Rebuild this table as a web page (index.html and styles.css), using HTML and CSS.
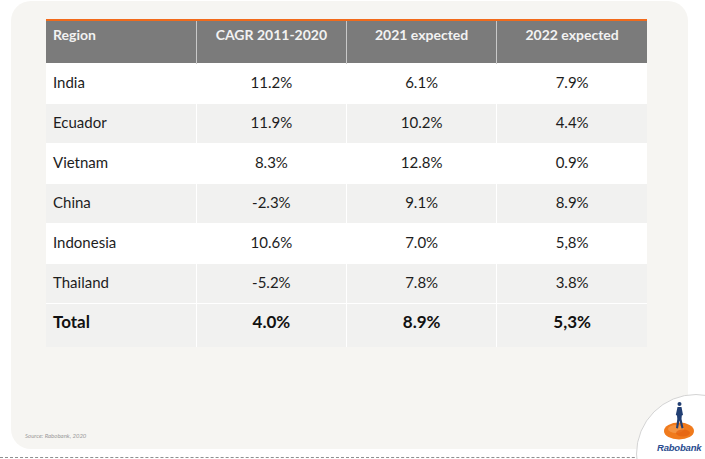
FILE: index.html
```html
<!DOCTYPE html>
<html>
<head>
<meta charset="utf-8">
<link rel="stylesheet" href="styles.css">
</head>
<body>
<div class="page">
  <div class="card">
    <table class="data">
      <thead>
        <tr><th class="first">Region</th><th>CAGR 2011-2020</th><th>2021 expected</th><th>2022 expected</th></tr>
      </thead>
      <tbody>
        <tr class="w"><td class="first">India</td><td>11.2%</td><td>6.1%</td><td>7.9%</td></tr>
        <tr class="g"><td class="first">Ecuador</td><td>11.9%</td><td>10.2%</td><td>4.4%</td></tr>
        <tr class="w"><td class="first">Vietnam</td><td>8.3%</td><td>12.8%</td><td>0.9%</td></tr>
        <tr class="g"><td class="first">China</td><td>-2.3%</td><td>9.1%</td><td>8.9%</td></tr>
        <tr class="w"><td class="first">Indonesia</td><td>10.6%</td><td>7.0%</td><td>5,8%</td></tr>
        <tr class="g"><td class="first">Thailand</td><td>-5.2%</td><td>7.8%</td><td>3.8%</td></tr>
        <tr class="g total"><td class="first">Total</td><td>4.0%</td><td>8.9%</td><td>5,3%</td></tr>
      </tbody>
    </table>
    <div class="source">Source: Rabobank, 2020</div>
  </div>
  <div class="rule"></div>
  <div class="logo">
    <svg class="mark" width="40" height="40" viewBox="0 0 40 40">
      <ellipse cx="20" cy="30" rx="15" ry="8.5" fill="#f07a1c"/>
      <ellipse cx="17" cy="28" rx="8" ry="4" fill="#f7a35a" opacity="0.6"/>
      <ellipse cx="24" cy="32" rx="7" ry="3.5" fill="#e35f10" opacity="0.7"/>
      <circle cx="20.5" cy="3" r="2" fill="#223f73"/>
      <path d="M18.5 6 L22.5 6 L24 14 L22.8 14.5 L22.5 18 L24.5 27 L22.5 27.5 L20.5 19.5 L19 27.5 L17 27 L18.3 18 L18 14.5 L16.8 14 Z" fill="#223f73"/>
    </svg>
    <span class="brand">Rabobank</span>
  </div>
</div>
</body>
</html>
```
FILE: styles.css
```css
html, body {
  margin: 0;
  padding: 0;
  background: #ffffff;
}
.page {
  position: relative;
  width: 705px;
  height: 459px;
  overflow: hidden;
  font-family: Lato, "Open Sans", sans-serif;
}
.card {
  margin-left: 11px;
  margin-top: 1px;
  width: 677px;
  height: 448px;
  box-sizing: border-box;
  padding: 18px 0 0 35px;
  background: #f6f5f2;
  border-radius: 20px 20px 0 20px;
  display: flex;
  flex-direction: column;
}
.data {
  width: 601px;
  border-collapse: collapse;
  border-top: 2px solid #f26a1b;
  table-layout: fixed;
}
.data th {
  background: #7b7b7b;
  color: #f2f2f2;
  font-weight: 700;
  font-size: 14px;
  height: 43px;
  box-sizing: border-box;
  padding: 5px 0 0 0;
  vertical-align: top;
  text-align: center;
  border-left: 1px solid #c9c9c9;
}
.data th.first, .data td.first {
  text-align: left;
  padding-left: 7px;
  border-left: none;
}
.data td {
  font-size: 15px;
  color: #1d1d1d;
  height: 40px;
  box-sizing: border-box;
  padding: 9px 0 0 0;
  vertical-align: top;
  text-align: center;
  border-left: 1px solid #ffffff;
  border-top: 1px solid #ffffff;
}
.data tr.w td {
  background: #ffffff;
}
.data tr.g td {
  background: #f1f1f0;
}
.data tr.total td {
  font-weight: 700;
  font-size: 17px;
  color: #111111;
  height: 44px;
  padding-top: 7px;
}
.source {
  margin-top: auto;
  margin-left: -21px;
  margin-bottom: 10px;
  font-size: 6px;
  font-style: italic;
  color: #9a9a9a;
}
.rule {
  margin-top: 8px;
  border-top: 1px dashed #8f8f8f;
}
.logo {
  position: absolute;
  left: 636px;
  top: 394px;
  width: 118px;
  height: 118px;
  border-radius: 50%;
  background: #ffffff;
  border: 1px solid #d4d4d4;
}
.mark {
  position: absolute;
  left: 22px;
  top: 6px;
}
.brand {
  position: absolute;
  left: 20px;
  top: 47px;
  font-family: "Liberation Sans", Arial, sans-serif;
  font-size: 9.5px;
  font-weight: 700;
  font-style: italic;
  color: #2b4d90;
  letter-spacing: -0.2px;
}
```
